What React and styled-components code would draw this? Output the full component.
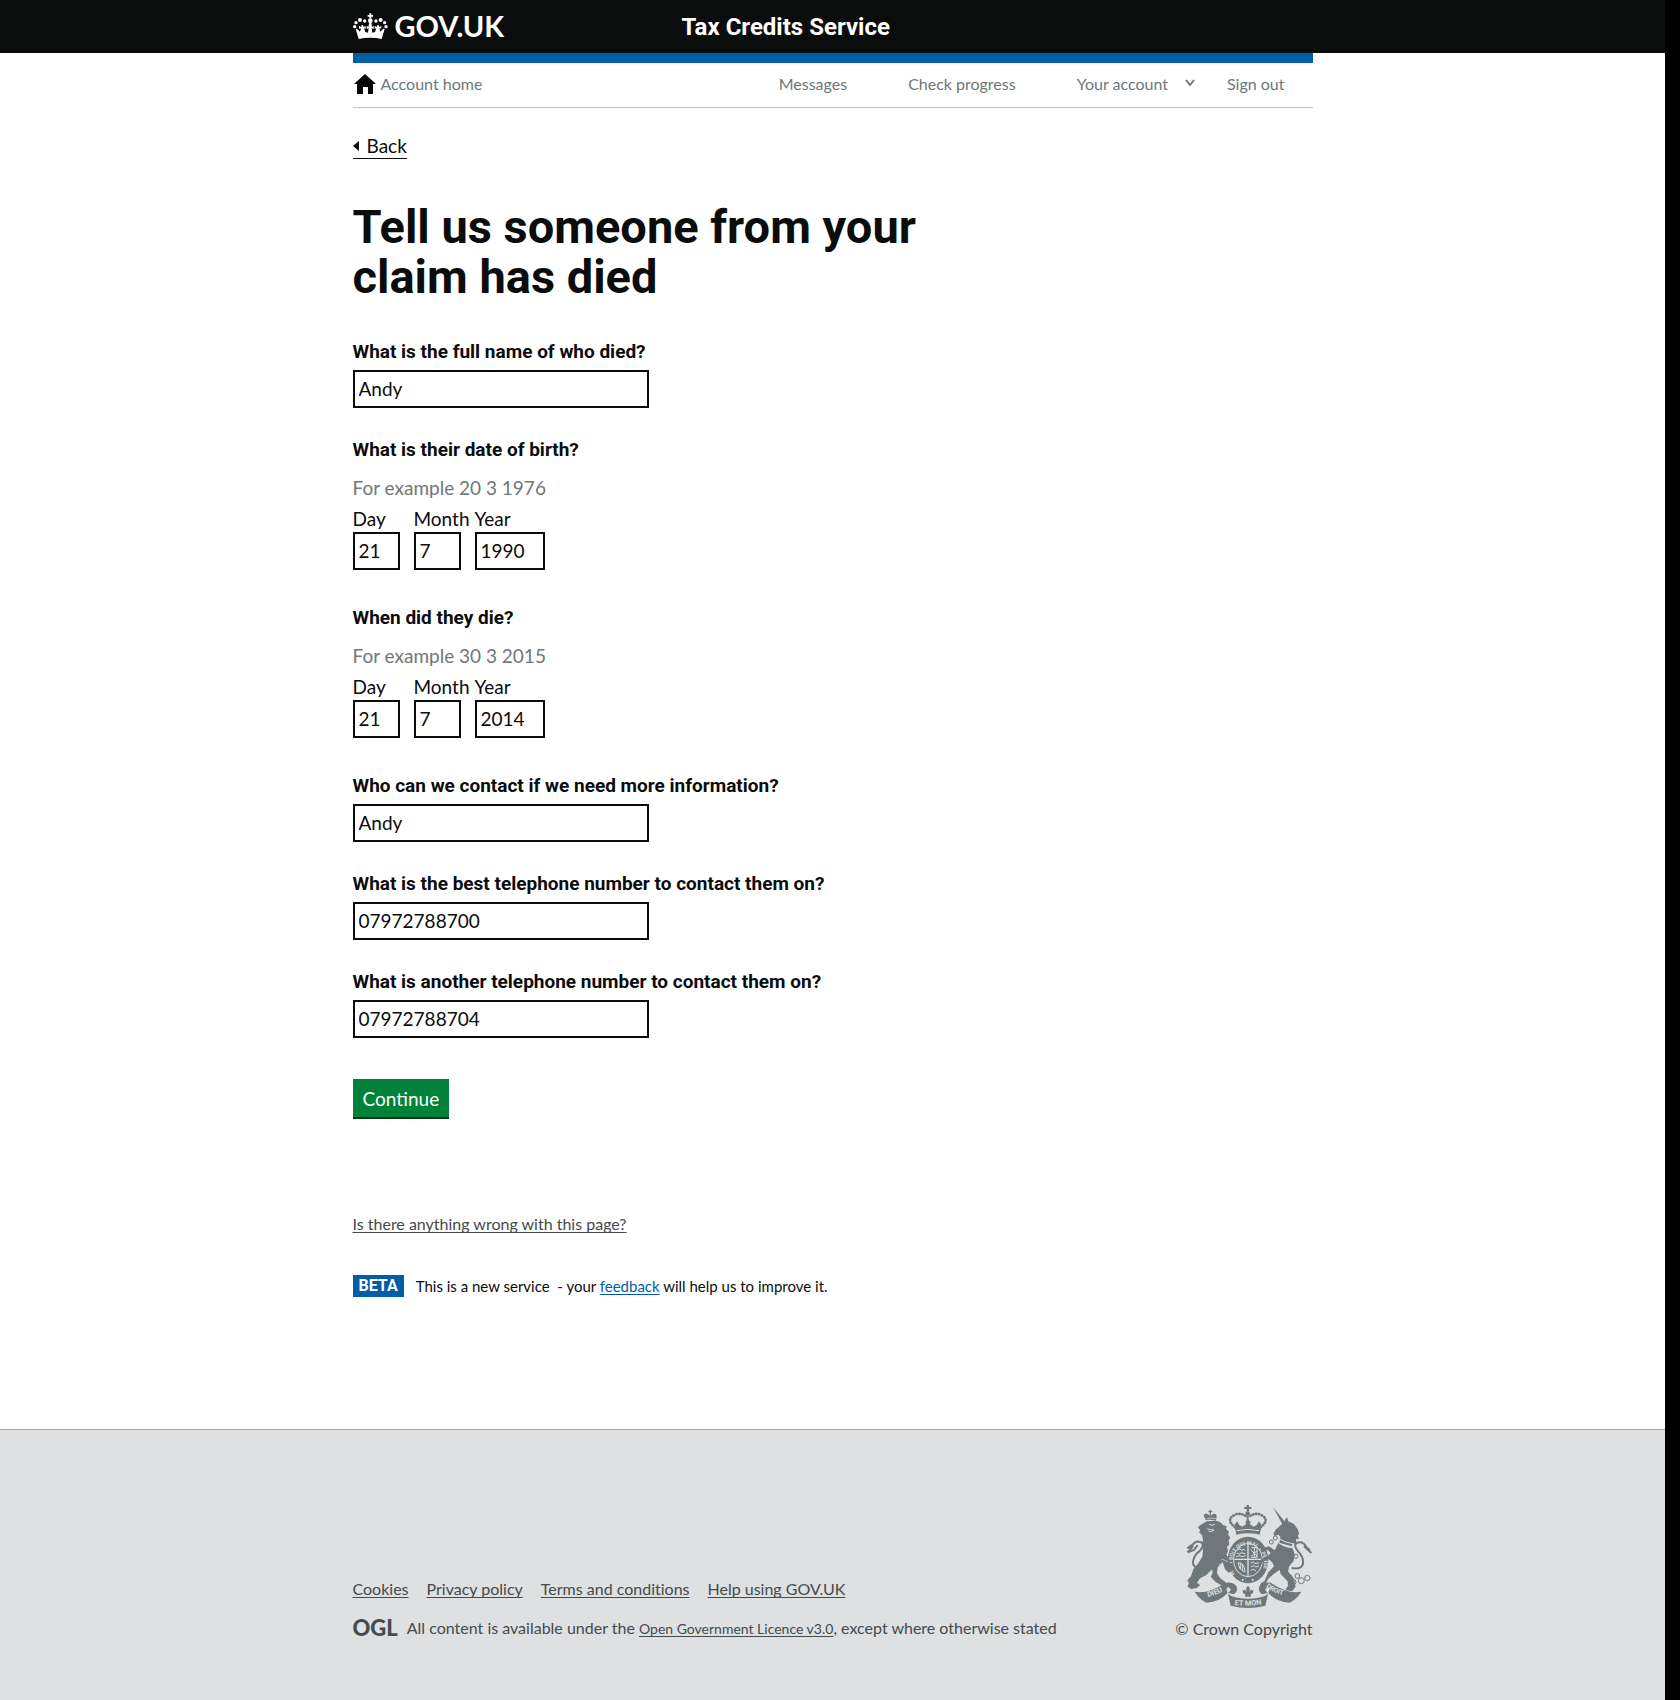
import React from "react";
import styled, { createGlobalStyle } from "styled-components";

const light = `Lato, "Liberation Sans", sans-serif`;
const bold = `Roboto, "Liberation Sans", sans-serif`;
const ink = "#0b0c0c";
const grey = "#6f777b";
const footerInk = "#454a4c";
const blue = "#005ea5";
const footerBg = "#dee0e2";

const GlobalStyle = createGlobalStyle`
  *, *::before, *::after { box-sizing: border-box; }
  html { background: #000; }
  body { margin: 0; font-family: ${light}; font-variant-ligatures: none; color: ${ink}; }
  h1, h2, p, ul, fieldset { margin: 0; padding: 0; border: 0; }
  ul { list-style: none; }
  svg { display: block; }
`;

const Page = styled.div`
  min-height: 100vh;
  margin-right: 15px;
  background: #fff;
  display: flex;
  flex-direction: column;
`;

const Container = styled.div`
  width: 100%;
  max-width: 960px;
  margin: 0 auto;
`;

const Header = styled.header`
  background: ${ink};
`;

const HeaderInner = styled(Container)`
  height: 53px;
  display: flex;
  align-items: center;
`;

const LogoCell = styled.div`
  flex: 0 0 329px;
`;

const LogoLink = styled.a`
  display: inline-flex;
  align-items: center;
  gap: 7px;
  padding-bottom: 2px;
  color: #fff;
  font-size: 29px;
  font-weight: 700;
  line-height: 35px;
  text-decoration: none;
`;

const ServiceName = styled.a`
  color: #fff;
  font-family: ${bold};
  font-size: 24px;
  font-weight: 700;
  line-height: 30px;
  text-decoration: none;
`;

const AccountNav = styled.nav`
  display: flex;
  align-items: center;
  justify-content: space-between;
  border-top: 10px solid ${blue};
  border-bottom: 1px solid #bfc1c3;
  height: 55px;
  padding: 0 28px 2px 0;
`;

const NavList = styled.ul`
  display: flex;
  gap: 61px;
`;

const NavItem = styled.li`
  margin-right: ${(p) => (p.$tight ? "-30px" : "0")};
`;

const NavLink = styled.a`
  display: flex;
  align-items: center;
  gap: ${(p) => p.$gap || 0}px;
  color: ${grey};
  font-size: 16px;
  line-height: 20px;
  text-decoration: none;
`;

const BackLink = styled.a`
  display: inline-flex;
  align-items: center;
  gap: 8px;
  margin-top: 25px;
  color: ${ink};
  font-size: 19px;
  line-height: 25px;
  border-bottom: 1px solid ${ink};
  text-decoration: none;
`;

const Title = styled.h1`
  max-width: 630px;
  margin: 43px 0 37px;
  font-family: ${bold};
  font-size: 47px;
  font-weight: 700;
  line-height: 50px;
`;

const Field = styled.div`
  margin-bottom: 29px;
`;

const FieldLabel = styled.label`
  display: block;
  margin-bottom: 6px;
  font-family: ${bold};
  font-size: 19px;
  font-weight: 700;
  line-height: 25px;
`;

const TextInput = styled.input`
  display: block;
  width: ${(p) => p.$width};
  height: 38px;
  margin: 0;
  padding: 0 4px 2px;
  border: 2px solid ${ink};
  border-radius: 0;
  background: #fff;
  color: ${ink};
  font-family: ${light};
  font-size: 19px;
`;

const DateGroup = styled.fieldset`
  margin-bottom: 35px;
  min-width: 0;
`;

const DateLegend = styled.legend`
  padding: 0;
  margin-bottom: 13px;
  font-family: ${bold};
  font-size: 19px;
  font-weight: 700;
  line-height: 25px;
`;

const Hint = styled.p`
  margin-bottom: 6px;
  color: ${grey};
  font-size: 19px;
  line-height: 25px;
`;

const DateRow = styled.div`
  display: grid;
  grid-template-columns: 47px 47px 70px;
  gap: 14px;
`;

const PartLabel = styled.label`
  display: block;
  margin-bottom: 1px;
  font-size: 19px;
  line-height: 25px;
  white-space: nowrap;
`;

const SubmitButton = styled.button`
  display: block;
  margin: 41px 0 0;
  padding: 7px 10px 6px;
  border: 0;
  border-radius: 0;
  background: #00823b;
  box-shadow: 0 2px 0 #003618;
  color: #fff;
  font-family: ${light};
  font-size: 19px;
  line-height: 25px;
  cursor: pointer;
`;

const PlainLink = styled.a`
  color: ${(p) => p.$color || footerInk};
  font-size: ${(p) => (p.$small ? "14px" : "inherit")};
  text-decoration: underline;
  text-decoration-thickness: 1px;
  text-decoration-skip-ink: none;
  text-underline-offset: 2px;
`;

const ReportLine = styled.p`
  margin-top: 97px;
  font-size: 16px;
  line-height: 20px;
`;

const Phase = styled.div`
  display: flex;
  align-items: center;
  gap: 12px;
  margin: 41px 0 132px;
  font-size: 15px;
  line-height: 20px;
`;

const PhaseTag = styled.strong`
  padding: 1px 6px;
  background: ${blue};
  color: #fff;
  font-family: ${bold};
  font-size: 16px;
  font-weight: 700;
  line-height: 20px;
`;

const Footer = styled.footer`
  flex: 1;
  border-top: 1px solid #a1acb2;
  background: ${footerBg};
  color: ${footerInk};
`;

const FooterInner = styled(Container)`
  display: flex;
  align-items: flex-end;
  justify-content: space-between;
  padding: 74px 0 61px;
  font-size: 16px;
  line-height: 20px;
`;

const FooterLinks = styled.ul`
  display: flex;
  gap: 18px;
  margin-bottom: 19px;
`;

const Licence = styled.div`
  display: flex;
  align-items: center;
  gap: 9px;
`;

const OglMark = styled.span`
  padding-bottom: 2px;
  font-size: 22px;
  font-weight: 900;
  line-height: 18px;
`;

const Copyright = styled.div`
  display: flex;
  flex-direction: column;
  align-items: flex-end;
  gap: 11px;
`;

const CrownIcon = () => (
  <svg width="35" height="26" viewBox="39 38 105 78" fill="#fff" aria-hidden="true">
    <path d="M88 39h6v5h5v5h-5v5h-6v-5h-5v-5h5z" />
    {[[44, 79, 5], [48, 67, 5], [60, 59, 6], [74, 62, 5], [91, 61, 7], [108, 62, 5], [122, 59, 6], [134, 67, 5], [138, 79, 5]].map(([x, y, r]) => (
      <circle key={x} cx={x} cy={y} r={r} />
    ))}
    <path d="M88 66h6l2 14 5-4v10l-6-2 2 13 8-2 4-11-5 1v-8l6 3 2-6h4l1 6 7-3v8l-6-1 3 10 9-9 4 1-9 30Q91 108 56 116l-9-30 4-1 9 9 3-10-6 1v-8l7 3 1-6h4l2 6 6-3v8l-5-1 4 11 8 2 2-13-6 2V76l5 4z" />
  </svg>
);

const HomeIcon = () => (
  <svg width="24" height="22" viewBox="0 0 24 22" fill="#000" aria-hidden="true">
    <path d="M12 1 23 11h-3v10h-5v-7h-5v7H4V11H1z" />
  </svg>
);

const Chevron = () => (
  <svg width="12" height="12" viewBox="0 0 12 12" fill="none" stroke={grey} strokeWidth="2" aria-hidden="true">
    <path d="m2 2 4 5 4-5" />
  </svg>
);

const BackArrow = () => (
  <svg width="6" height="10" viewBox="0 0 6 10" fill={ink} aria-hidden="true">
    <path d="M6 0v10L0 5z" />
  </svg>
);

const Crest = () => (
  <svg width="126" height="104" viewBox="9 12 378 312" fill={grey} role="img" aria-label="Royal coat of arms">
    <defs>
      <path id="garter" d="M155 226A48 56 0 1 1 230 225" />
      <path id="dieu" d="M72 291Q105 284 134 262" />
      <path id="mon" d="M146 314Q192 321 245 311" />
      <path id="droit" d="M245 261Q274 284 318 289" />
    </defs>

    <path d="M188 15h7v6h7v6h-7v7h-7v-7h-7v-6h7z" />
    <circle cx="191" cy="41" r="7" />
    <g fill="none" stroke={grey} strokeWidth="8" strokeLinecap="round" strokeDasharray="1 8">
      <path d="M153 82Q126 60 148 47 168 34 190 52" />
      <path d="M230 82Q257 60 235 47 215 34 193 52" />
      <path d="M191 51v30" />
    </g>
    <path d="M151 76l8-12 7 11 9 5 12-8-3-6 8-7 8 7-3 6 12 8 9-5 7-11 8 12-6 28q-35-8-70 0z" />
    <path d="M158 92q34-8 67 0" fill="none" stroke={footerBg} strokeWidth="3" />

    <ellipse cx="192" cy="180" rx="61" ry="70" />
    <ellipse cx="192" cy="180" rx="43" ry="50" fill="none" stroke={footerBg} strokeWidth="3" />
    <path d="M192 133v94M151 178h82" stroke={footerBg} strokeWidth="4" />
    <g fill="none" stroke={footerBg} strokeWidth="3">
      <path d="M160 151l8-5 4 5 8-3 4 4M158 160l9 2 5-4 12 3M157 170l11-3 6 3 11-3" />
      <path d="M200 149l20 20M220 151l-19 19M202 143h17v29h-18M211 143v29" />
      <path d="M163 188q18 0 20 28M163 188q0 20 19 28M169 190v17M175 193v18" />
      <path d="M200 189l8-3 5 5 13-3M201 200l9-3 5 4 9-3M200 211l8-3 8 4" />
    </g>
    <text fill={footerBg} fontFamily={bold} fontWeight="700" fontSize="16">
      <textPath href="#garter" startOffset="4">HONI SOIT QUI MAL Y PENSE</textPath>
    </text>
    <circle cx="176" cy="240" r="3" fill={footerBg} />
    <circle cx="206" cy="240" r="3" fill={footerBg} />

    <path d="M65 60l-6-14q4-8 12-4l6 5V37h-4v-4h4v-4h4v4h4v4h-4v10l6-5q10-3 11 6l-2 14q-16-5-31-2z" />
    <path d="M68 56q13-4 28 0" fill="none" stroke={footerBg} strokeWidth="2" />
    <path d="M68 64l27-2 13 4 8 8 12 5-2 8 9 8-3 9 7 9-5 8 2 13-7 6 3 12-5 12 8 12 3 14 10 4-2 8 6 6-10 4-7 7-12-11-7-22-15 16-2 18 9 14 16 12 3 12-16-3-17-10-14-15 6-12-2-10-18 18-18 9-9 13 10 8-12 9-16 2-11-8 5-9-5-9 11-12 7-21 15-18 12-20 2-17-3-18 3-16-3-14-9-8 4-7-7-7 4-6z" />
    <path d="M76 73l9 3 8-4M70 86l10 3 10 1-8 5-8-2" fill="none" stroke={footerBg} strokeWidth="3" />
    <path d="M64 211Q18 204 29 178 32 163 46 154 66 131 48 126 36 121 26 134L13 143 24 142 11 157 30 150 41 135" fill="none" stroke={grey} strokeWidth="6" />
    <path d="M112 177l20 8M106 190l16 27" fill="none" stroke={footerBg} strokeWidth="2" />

    <path d="M267 21l36 45-8 7z" />
    <path d="M301 64l8-13 4 13 17 8 11 16 5 15-5 2 4 12-9 1 1 13-11-1-3 9-37-11 3-18-6-6-11 4-4-7 8-13 12-10z" />
    <path d="M283 114q19 15 44 17" fill="none" stroke={footerBg} strokeWidth="3" />
    <path d="M283 129q18 15 43 16l6 18-3 20-13 15-4 16 18 22 5 24-11 14-20-4 8-13-1-13-21-22-3-13-18 13-16 14-12 22-15 3 6-13 9-4 12-27 17-18-6-13-10-8-18 8-4 8-8-8 8-8 22-12 6-7-10-10-14 5-9-11-2-13 10 2 6 11 14-4 17 12z" />
    <path d="M323 204Q359 210 357 184 356 168 343 155 323 130 345 127 360 126 367 142L378 151M360 138L382 159" fill="none" stroke={grey} strokeWidth="6" />
    <g fill="none" stroke={grey} strokeWidth="3">
      <circle cx="274" cy="114" r="6" />
      <circle cx="262" cy="126" r="6" />
      <circle cx="336" cy="169" r="6" fill={footerBg} />
      <circle cx="317" cy="232" r="7" />
      <circle cx="329" cy="246" r="7" />
      <circle cx="340" cy="228" r="7" />
      <circle cx="352" cy="242" r="9" />
      <circle cx="370" cy="234" r="8" />
    </g>

    <path d="M32 275q40 8 92-27 24-3 34 12 5 14-9 23l-16-4 8-10-8-9-6 7 4 12q-25 27-63 29-20-8-36-33z" />
    <path d="M352 275q-40 8-92-27-24-3-34 12-5 14 9 23l16-4-8-10 8-9 6 7-4 12q25 27 63 29 20-8 36-33z" />
    <path d="M132 281q14 14 60 15 46-1 60-15l-8 36q-52 14-104 0z" />
    <g fill={footerBg} fontFamily={bold} fontWeight="700" fontSize="22">
      <text><textPath href="#dieu">DIEU</textPath></text>
      <text><textPath href="#mon" startOffset="6">ET MON</textPath></text>
      <text fontSize="20"><textPath href="#droit">DROIT</textPath></text>
    </g>
    <path d="M192 256l6 11-2 9 5-7 7 2-1 9-8 3 3 7h-20l3-7-8-3-1-9 7-2 5 7-2-9z" />
  </svg>
);

const TextField = ({ id, label, value }) => (
  <Field>
    <FieldLabel htmlFor={id}>{label}</FieldLabel>
    <TextInput id={id} type="text" defaultValue={value} $width="296px" />
  </Field>
);

const DateField = ({ id, legend, hint, values }) => (
  <DateGroup aria-describedby={`${id}-hint`}>
    <DateLegend>{legend}</DateLegend>
    <Hint id={`${id}-hint`}>{hint}</Hint>
    <DateRow>
      {["Day", "Month", "Year"].map((part, i) => (
        <div key={part}>
          <PartLabel htmlFor={`${id}-${part}`}>{part}</PartLabel>
          <TextInput id={`${id}-${part}`} type="text" defaultValue={values[i]} $width="100%" />
        </div>
      ))}
    </DateRow>
  </DateGroup>
);

export default function App() {
  return (
    <Page>
      <GlobalStyle />
      <Header>
        <HeaderInner>
          <LogoCell>
            <LogoLink href="#"><CrownIcon />GOV.UK</LogoLink>
          </LogoCell>
          <ServiceName href="#">Tax Credits Service</ServiceName>
        </HeaderInner>
      </Header>

      <Container>
        <AccountNav aria-label="Account">
          <NavLink href="#" $gap={4}><HomeIcon />Account home</NavLink>
          <NavList>
            <NavItem><NavLink href="#">Messages</NavLink></NavItem>
            <NavItem><NavLink href="#">Check progress</NavLink></NavItem>
            <NavItem $tight><NavLink href="#" $gap={16}>Your account<Chevron /></NavLink></NavItem>
            <NavItem><NavLink href="#">Sign out</NavLink></NavItem>
          </NavList>
        </AccountNav>

        <main>
          <BackLink href="#"><BackArrow />Back</BackLink>
          <Title>Tell us someone from your claim has died</Title>
          <form onSubmit={(e) => e.preventDefault()}>
            <TextField id="name" label="What is the full name of who died?" value="Andy" />
            <DateField id="birth" legend="What is their date of birth?" hint="For example 20 3 1976" values={["21", "7", "1990"]} />
            <DateField id="death" legend="When did they die?" hint="For example 30 3 2015" values={["21", "7", "2014"]} />
            <TextField id="contact" label="Who can we contact if we need more information?" value="Andy" />
            <TextField id="phone" label="What is the best telephone number to contact them on?" value="07972788700" />
            <TextField id="phone-other" label="What is another telephone number to contact them on?" value="07972788704" />
            <SubmitButton type="submit">Continue</SubmitButton>
          </form>
          <ReportLine><PlainLink href="#">Is there anything wrong with this page?</PlainLink></ReportLine>
          <Phase>
            <PhaseTag>BETA</PhaseTag>
            <span>This is a new service &nbsp;- your <PlainLink href="#" $color={blue}>feedback</PlainLink> will help us to improve it.</span>
          </Phase>
        </main>
      </Container>

      <Footer>
        <FooterInner>
          <div>
            <FooterLinks>
              {["Cookies", "Privacy policy", "Terms and conditions", "Help using GOV.UK"].map((text) => (
                <li key={text}><PlainLink href="#">{text}</PlainLink></li>
              ))}
            </FooterLinks>
            <Licence>
              <OglMark>OGL</OglMark>
              <span>All content is available under the <PlainLink href="#" $small>Open Government Licence v3.0</PlainLink>, except where otherwise stated</span>
            </Licence>
          </div>
          <Copyright>
            <Crest />
            <span>© Crown Copyright</span>
          </Copyright>
        </FooterInner>
      </Footer>
    </Page>
  );
}
